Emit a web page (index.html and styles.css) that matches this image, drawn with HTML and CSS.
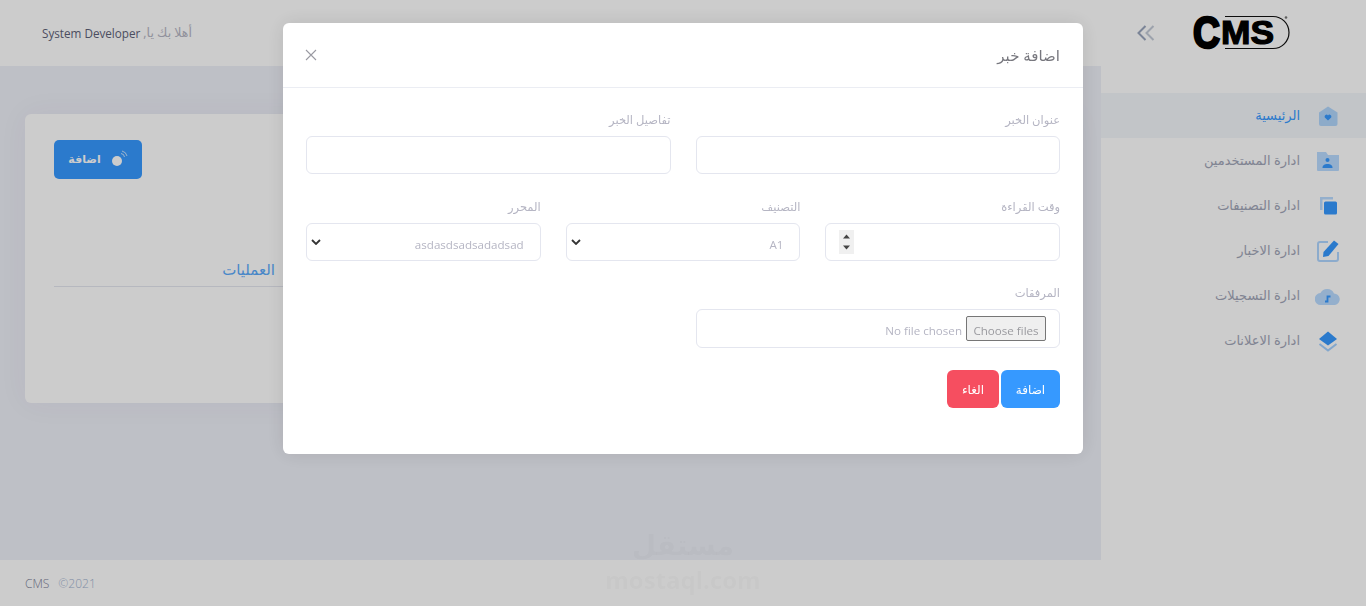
FILE: index.html
```html
<!DOCTYPE html>
<html lang="ar" dir="rtl">
  <head>
    <meta charset="UTF-8" />
    <meta name="viewport" content="width=device-width, initial-scale=1.0" />
    <title>CMS</title>
    <link rel="stylesheet" href="styles.css">
  </head>
  <body>
    <div class="app">
      <aside class="sidebar">
        <div class="brand">
          <svg class="logo" width="98" height="36" viewBox="0 0 98 36">
            <path d="M33 1.500H81a16 16 0 0 1 0 32H33" fill="none" stroke="#111" stroke-width="1.200" />
            <circle cx="94" cy="2.500" r="1.300" fill="#777" />
            <text><tspan class="logo-c" x="1" y="33" textLength="27" lengthAdjust="spacingAndGlyphs">C</tspan><tspan class="logo-ms" x="29" y="29" textLength="53" lengthAdjust="spacingAndGlyphs">MS</tspan></text>
          </svg>
          <svg class="toggle" width="18" height="16" viewBox="0 0 18 16">
            <path d="M8.500 1 1.500 8l7 7" fill="none" stroke="#9aa6bd" stroke-width="2" />
            <path d="M16.500 1 9.500 8l7 7" fill="none" stroke="#c4cbd8" stroke-width="2" />
          </svg>
        </div>
        <nav class="menu">
          <a class="menu-item active">
            <svg class="menu-icon" width="24" height="24" viewBox="0 0 24 24">
              <path class="pale" d="M3 8.500 12 2.500l9.500 6V20a2 2 0 0 1-2 2H5a2 2 0 0 1-2-2z" />
              <path class="solid" d="M12 16.500 8.800 13.400a1.900 1.900 0 0 1 3.200-2 1.900 1.900 0 0 1 3.200 2z" />
            </svg>
            <span>الرئيسية</span>
          </a>
          <a class="menu-item">
            <svg class="menu-icon" width="24" height="24" viewBox="0 0 24 24">
              <path class="pale" d="M1 3h9l2 3h11v15a1 1 0 0 1-1 1H2a1 1 0 0 1-1-1z" />
              <circle class="solid" cx="11.500" cy="11" r="2" />
              <path class="solid" d="M6.500 19c0-3 2-4 5-4s5 1 5 4z" />
            </svg>
            <span>ادارة المستخدمين</span>
          </a>
          <a class="menu-item">
            <svg class="menu-icon" width="24" height="24" viewBox="0 0 24 24">
              <path class="pale" d="M4 3h13v2.500H6.500V16H4z" />
              <rect class="solid" x="8" y="7.500" width="13" height="13" rx="1.500" />
            </svg>
            <span>ادارة التصنيفات</span>
          </a>
          <a class="menu-item">
            <svg class="menu-icon" width="24" height="24" viewBox="0 0 24 24">
              <path d="M12 3H4a2 2 0 0 0-2 2v15a2 2 0 0 0 2 2h16a2 2 0 0 0 2-2v-7" fill="none" stroke="#3699ff" stroke-opacity=".4" stroke-width="2" />
              <path class="solid" d="M18 1.500 22.500 5 12.500 17l-5.500 1 .5-5z" />
            </svg>
            <span>ادارة الاخبار</span>
          </a>
          <a class="menu-item">
            <svg class="menu-icon cloud" width="26" height="24" viewBox="0 0 26 24">
              <path class="pale" d="M6 21a6 6 0 0 1-.5-12A7.500 7.500 0 0 1 19 9.500 5.800 5.800 0 0 1 20 21z" />
              <path d="M10 17.500h2.500V12.500h3" fill="none" stroke="#3699ff" stroke-width="1.800" />
            </svg>
            <span>ادارة التسجيلات</span>
          </a>
          <a class="menu-item">
            <svg class="menu-icon" width="24" height="24" viewBox="0 0 24 24">
              <path class="solid" d="M12 2.500 21 10 12 16.500 3 10z" />
              <path d="M3.500 15 12 21.500l8.500-6.500" fill="none" stroke="#3699ff" stroke-opacity=".45" stroke-width="2" />
            </svg>
            <span>ادارة الاعلانات</span>
          </a>
        </nav>
      </aside>

      <div class="main">
        <header class="topbar">
          <span class="greeting">أهلا بك يا,</span>
          <span class="username">System Developer</span>
        </header>

        <section class="content">
          <div class="card">
            <div class="card-toolbar">
              <button class="btn-add">
                <svg width="18" height="18" viewBox="0 0 18 18">
                  <circle cx="7" cy="11" r="5" fill="#fff" />
                  <path d="M11 3.500a4 4 0 0 1 3.500 3.500M12 1a6.500 6.500 0 0 1 5 5" fill="none" stroke="#fff" stroke-opacity=".7" />
                </svg>
                <span>اضافة</span>
              </button>
            </div>
            <table class="news-table">
              <thead>
                <tr>
                  <th>عنوان الخبر</th>
                  <th>التصنيف</th>
                  <th>المحرر</th>
                  <th class="ops">العمليات</th>
                </tr>
              </thead>
            </table>
          </div>
        </section>

        <footer class="footer">
          <span class="footer-name">CMS</span>
          <span class="footer-year">©2021</span>
        </footer>
      </div>
    </div>

    <div class="watermark">
      <span class="wm-ar">مستقل</span>
      <span class="wm-en">mostaql.com</span>
    </div>

    <div class="overlay">
      <div class="modal">
        <div class="modal-header">
          <h5>اضافة خبر</h5>
          <svg class="close" width="12" height="12" viewBox="0 0 12 12">
            <path d="M1 1l10 10M11 1 1 11" stroke="#9a9aa2" stroke-width="1.100" />
          </svg>
        </div>
        <form class="modal-body">
          <div class="row two">
            <div class="field">
              <label>عنوان الخبر</label>
              <input type="text" />
            </div>
            <div class="field">
              <label>تفاصيل الخبر</label>
              <input type="text" />
            </div>
          </div>
          <div class="row three">
            <div class="field">
              <label>وقت القراءة</label>
              <div class="number-box">
                <input type="number" />
                <svg class="spin" width="15" height="24" viewBox="0 0 15 24">
                  <path d="M7.500 4.500 11 8.500H4zM4 15.500h7L7.500 19.500z" fill="#444" />
                </svg>
              </div>
            </div>
            <div class="field">
              <label>التصنيف</label>
              <select><option>A1</option></select>
            </div>
            <div class="field">
              <label>المحرر</label>
              <select><option>asdasdsadsadadsad</option></select>
            </div>
          </div>
          <div class="row two">
            <div class="field">
              <label>المرفقات</label>
              <div class="file-box">
                <button type="button" class="file-btn">Choose files</button>
                <span class="file-name">No file chosen</span>
              </div>
            </div>
          </div>
          <div class="actions">
            <button type="button" class="btn btn-primary">اضافة</button>
            <button type="button" class="btn btn-danger">الغاء</button>
          </div>
        </form>
      </div>
    </div>
  </body>
</html>
```

FILE: styles.css
```css
:root {
  --primary: #3699ff;
  --danger: #f64e60;
  --page: #eef0f8;
  --border: #e4e6ef;
  --muted: #b5b5c3;
  --text: #7e8299;
}

* {
  box-sizing: border-box;
}

html,
body {
  height: 100%;
}

body {
  margin: 0;
  overflow: hidden;
  font-family: "Open Sans", "DejaVu Sans", sans-serif;
  font-size: 12px;
  color: var(--text);
  background-color: var(--page);
}

.app {
  display: flex;
  height: 100%;
}

/* Sidebar */
.sidebar {
  width: 265px;
  flex-shrink: 0;
  background-color: white;
}

.brand {
  height: 93px;
  padding: 15px 76px 0 0;
  display: flex;
  align-items: flex-start;
  gap: 37px;
}

.logo {
  direction: ltr;
  flex-shrink: 0;
  overflow: visible;
}

.logo-c {
  font: 700 44px "Liberation Sans", sans-serif;
  stroke: #000;
  stroke-width: 2.500px;
}

.logo-ms {
  font: 700 33px "Liberation Sans", sans-serif;
  stroke: #000;
  stroke-width: 1.200px;
}

.toggle {
  margin-top: 10px;
  flex-shrink: 0;
}

.menu-item {
  display: flex;
  align-items: center;
  height: 45px;
  padding-right: 26px;
  gap: 16px;
  color: #a1a5b7;
  font-size: 13px;
}

.menu-item span {
  padding-bottom: 2px;
}

.menu-item.active {
  background-color: #f3f7fb;
  color: var(--primary);
}

.menu-icon {
  width: 24px;
  flex-shrink: 0;
}

.menu-icon.cloud {
  width: 26px;
  margin: 0 -1px;
}

.pale {
  fill: var(--primary);
  opacity: 0.35;
}

.solid {
  fill: var(--primary);
}

/* Main column */
.main {
  flex: 1;
  display: flex;
  flex-direction: column;
  min-width: 0;
}

.topbar {
  height: 66px;
  flex-shrink: 0;
  background-color: white;
  display: flex;
  align-items: center;
  justify-content: flex-end;
  gap: 3px;
  padding-left: 42px;
  padding-bottom: 1px;
}

.greeting {
  color: var(--muted);
  font-size: 12.500px;
}

.username {
  color: #5e6278;
  font-size: 11.700px;
}

.content {
  flex: 1;
  padding: 48px 25px 0;
}

.card {
  height: 289px;
  padding: 26px 29px;
  background-color: white;
  border-radius: 6px;
  box-shadow: 0 0 30px rgba(82, 63, 105, 0.05);
}

.card-toolbar {
  display: flex;
  justify-content: flex-end;
}

.btn-add {
  display: flex;
  align-items: center;
  justify-content: center;
  gap: 9px;
  width: 88px;
  height: 39px;
  padding-bottom: 3px;
  border: none;
  border-radius: 5px;
  background-color: var(--primary);
  color: white;
  font-family: inherit;
  font-size: 11px;
  font-weight: bold;
}

.btn-add span {
  padding-bottom: 1px;
}

.news-table {
  width: 100%;
  margin-top: 79px;
  border-collapse: collapse;
}

.news-table th {
  height: 28px;
  padding: 0 0 5px;
  border-bottom: 1px solid var(--border);
  color: #5aa9fb;
  font-size: 15px;
  font-weight: normal;
  text-align: right;
}

.news-table .ops {
  width: 221px;
}

.footer {
  height: 46px;
  flex-shrink: 0;
  display: flex;
  direction: ltr;
  align-items: center;
  gap: 9px;
  padding-left: 25px;
  background-color: white;
}

.footer-name {
  color: #7e8299;
  font-size: 12px;
  font-weight: 300;
}

.footer-year {
  color: #a3b4d0;
  font-size: 12px;
  font-weight: 300;
}

.watermark {
  position: fixed;
  left: 603px;
  top: 522px;
  width: 160px;
  display: flex;
  flex-direction: column;
  align-items: center;
  direction: ltr;
  z-index: 20;
  color: rgba(0, 0, 0, 0.022);
  font-weight: bold;
}

.wm-ar {
  font-size: 28px;
  line-height: 45px;
}

.wm-en {
  font-size: 24px;
  line-height: 26px;
}

/* Modal */
.overlay {
  position: fixed;
  top: 0;
  left: 0;
  width: 100%;
  height: 100%;
  padding-top: 23px;
  display: flex;
  justify-content: center;
  align-items: flex-start;
  background-color: rgba(0, 0, 0, 0.2);
  z-index: 10;
}

.modal {
  width: 800px;
  height: 431px;
  background-color: white;
  border-radius: 6px;
  box-shadow: 0 0 20px rgba(0, 0, 0, 0.1);
}

.modal-header {
  height: 65px;
  padding: 0 23px 0 22px;
  display: flex;
  align-items: center;
  justify-content: space-between;
  border-bottom: 1px solid #ebedf3;
}

.modal-header h5 {
  margin: 0;
  color: #77777e;
  font-size: 15px;
  font-weight: normal;
}

.modal-body {
  padding: 24px 23px 0;
}

.row {
  display: grid;
  gap: 25px;
  margin-bottom: 25px;
}

.row.two {
  grid-template-columns: 1fr 1fr;
}

.row.three {
  grid-template-columns: 1fr 1fr 1fr;
  margin-bottom: 24px;
}

.field label {
  display: block;
  height: 16px;
  margin-bottom: 8px;
  color: var(--muted);
  font-size: 11.500px;
  line-height: 15px;
}

.field input,
.field select {
  display: block;
  width: 100%;
  height: 38px;
  padding: 0 13px;
  border: 1px solid var(--border);
  border-radius: 6px;
  background-color: white;
  color: var(--muted);
  font-family: inherit;
  font-size: 11.600px;
  outline: none;
}

.field select {
  appearance: none;
  padding-top: 5px;
  padding-right: 16px;
  background: white url("data:image/svg+xml,%3Csvg xmlns='http://www.w3.org/2000/svg' width='10' height='6'%3E%3Cpath d='M1 1l4 4 4-4' fill='none' stroke='%23333' stroke-width='1.800'/%3E%3C/svg%3E") no-repeat 4px 15px;
}

.number-box {
  position: relative;
}

.number-box input {
  appearance: textfield;
}

/* Always visible stepper, sits on top of the input */
.spin {
  position: absolute;
  left: 14px;
  top: 7px;
  background-color: #f0f0f0;
}

.file-box {
  height: 39px;
  padding: 0 13px;
  display: flex;
  align-items: center;
  gap: 4px;
  border: 1px solid var(--border);
  border-radius: 6px;
  color: var(--muted);
  font-size: 11.600px;
}

.file-name {
  padding-top: 3px;
}

.file-btn {
  width: 80px;
  height: 25px;
  padding: 3px 0 0;
  border: 1px solid #767676;
  border-radius: 2px;
  background-color: #efefef;
  color: #9a9a9f;
  font-family: inherit;
  font-size: 11.600px;
}

.actions {
  display: flex;
  gap: 2px;
  margin-top: -3px;
}

.btn {
  height: 38px;
  border: none;
  border-radius: 6px;
  color: white;
  font-family: inherit;
  font-size: 12px;
}

.btn-primary {
  width: 59px;
  background-color: var(--primary);
}

.btn-danger {
  width: 52px;
  background-color: var(--danger);
}
```
